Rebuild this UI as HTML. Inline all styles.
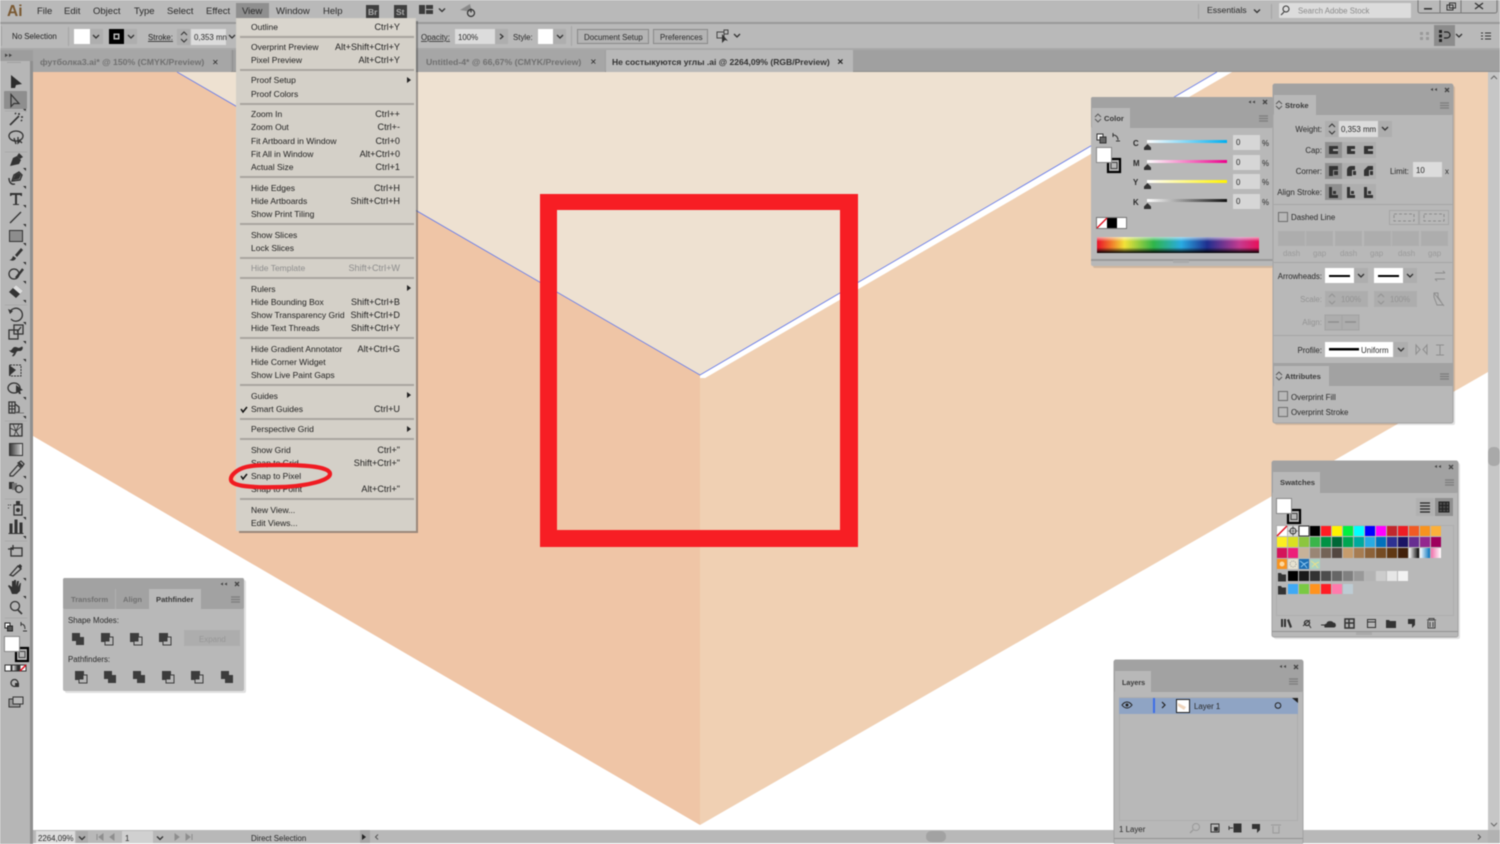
<!DOCTYPE html>
<html><head><meta charset="utf-8"><style>
html,body{margin:0;padding:0;width:1500px;height:844px;overflow:hidden;background:#fff}
svg{display:block;filter:blur(.4px)}
text{font-family:"Liberation Sans",sans-serif;font-size:7.9px;fill:#1f1f1f}
.m text{font-size:8.5px}
.m text.e{font-size:9.1px}
.e{text-anchor:end}
.d{fill:#8d8d8d}
.l{fill:#2a2a2a}
.g{fill:#8a8a8a}
.ic{fill:#333;stroke:none}
.st{fill:none;stroke:#333;stroke-width:1.3}
.pt{font-weight:bold;font-size:7.600px;fill:#3a3a3a}
.ti{font-weight:bold;font-size:8.700px;fill:#707070}
</style></head><body>
<svg width="1500" height="844" viewBox="0 0 1500 844" xmlns="http://www.w3.org/2000/svg">
<defs>
<linearGradient id="spec" x1="0" x2="1"><stop offset="0" stop-color="#e8102a"/><stop offset=".08" stop-color="#f0702a"/><stop offset=".17" stop-color="#f2e238"/><stop offset=".35" stop-color="#2fb54a"/><stop offset=".52" stop-color="#29abe2"/><stop offset=".68" stop-color="#1f2f8f"/><stop offset=".88" stop-color="#c43b8f"/><stop offset="1" stop-color="#e8105a"/></linearGradient>
<linearGradient id="fade" x1="0" x2="0" y1="0" y2="1"><stop offset="0" stop-color="#fff" stop-opacity=".6"/><stop offset=".28" stop-color="#fff" stop-opacity="0"/><stop offset=".66" stop-color="#000" stop-opacity="0"/><stop offset="1" stop-color="#000"/></linearGradient>
<linearGradient id="cG" x1="0" x2="1"><stop offset="0" stop-color="#fff"/><stop offset="1" stop-color="#00aeef"/></linearGradient>
<linearGradient id="mG" x1="0" x2="1"><stop offset="0" stop-color="#fff"/><stop offset="1" stop-color="#ec008c"/></linearGradient>
<linearGradient id="yG" x1="0" x2="1"><stop offset="0" stop-color="#fff"/><stop offset="1" stop-color="#fff200"/></linearGradient>
<linearGradient id="kG" x1="0" x2="1"><stop offset="0" stop-color="#fff"/><stop offset="1" stop-color="#111"/></linearGradient>
<linearGradient id="gr" x1="0" x2="1"><stop offset="0" stop-color="#333"/><stop offset="1" stop-color="#ddd"/></linearGradient>
<linearGradient id="gs" x1="0" x2="1"><stop offset="0" stop-color="#fff"/><stop offset="1" stop-color="#000"/></linearGradient>
<linearGradient id="gb" x1="0" x2="1"><stop offset="0" stop-color="#fff"/><stop offset="1" stop-color="#0071bc"/></linearGradient>
<linearGradient id="gp" x1="0" x2="1"><stop offset="0" stop-color="#f06eaa"/><stop offset="1" stop-color="#fff"/></linearGradient>
<g id="sq2"><rect x="0" y="0" width="8" height="8" fill="#3c3c3c"/><rect x="4" y="4" width="8" height="8" fill="#3c3c3c"/></g>
<g id="sq3"><rect x=".5" y=".5" width="8" height="8" fill="#3c3c3c" stroke="#3c3c3c"/><rect x="4" y="4" width="8" height="8" fill="#b8b8b8" stroke="#3c3c3c"/><rect x="4" y="4" width="4.500" height="4.500" fill="#3c3c3c"/></g>
<g id="fs"><rect x="12" y="12" width="12" height="13" fill="#b8b8b8" stroke="#000" stroke-width="2.2"/><rect x="15" y="15.500" width="6" height="6" fill="none" stroke="#444"/><rect x=".5" y=".5" width="15" height="15" fill="#fff" stroke="#8a8a8a"/></g>
<g id="chev"><path d="M-3-1.500 0 1.500 3-1.500" fill="none" stroke="#333" stroke-width="1.300"/></g>
<g id="mn"><path d="M0 0h9M0 2.500h9M0 5h9" stroke="#7d7d7d" stroke-width="1.200" fill="none"/></g>
<g id="pc"><path d="M0 3 3 0 6 3M0 5 3 8 6 5" stroke="#555" fill="none" stroke-width=".9"/></g>
<path id="tri" d="M0 3V0H-3Z" fill="#333"/>
</defs>

<!-- artwork -->
<rect x="33" y="72" width="1455" height="758" fill="#fff"/>
<polygon points="33,72 177,72 700,375 700,825 33,436" fill="#efc5a6"/>
<polygon points="700,378 705,378 1232,72 1488,72 1488,372 700,825" fill="#f0d0b3"/>
<polygon points="177,72 1217,72 700,375" fill="#eee1d1"/>
<polygon points="1217,72 1232,72 705,378 700,375" fill="#fff"/>
<path d="M177 72 700 375 1217 72" fill="none" stroke="#6a7de8" stroke-width=".9"/>
<path d="M540 194H858V547H540ZM557 210V530H840V210Z" fill="#f71e24" fill-rule="evenodd"/>

<!-- top bars -->
<rect width="1500" height="23" fill="#b9b9b9"/>
<rect y="22" width="1500" height="2" fill="#9a9a9a"/>
<rect y="24" width="1500" height="25" fill="#b9b9b9"/>
<rect y="48" width="1500" height="2" fill="#a8a8a8"/>
<rect y="50" width="1500" height="22" fill="#a0a0a0"/>
<rect y="71" width="1500" height="1" fill="#8f8f8f"/>
<text x="7" y="16" style="font-size:15.500px;font-weight:bold;fill:#7b5a33">Ai</text>
<text x="37" y="14" class="l" style="font-size:9.500px">File</text>
<text x="64" y="14" class="l" style="font-size:9.500px">Edit</text>
<text x="93" y="14" class="l" style="font-size:9.500px">Object</text>
<text x="134" y="14" class="l" style="font-size:9.500px">Type</text>
<text x="167" y="14" class="l" style="font-size:9.500px">Select</text>
<text x="206" y="14" class="l" style="font-size:9.500px">Effect</text>
<rect x="236" y="3" width="33" height="17" fill="#8f8f8f"/>
<text x="242" y="14" class="l" style="font-size:9.500px">View</text>
<text x="276" y="14" class="l" style="font-size:9.500px">Window</text>
<text x="323" y="14" class="l" style="font-size:9.500px">Help</text>
<rect x="366" y="5" width="13" height="13" fill="#3f3f3f"/><text x="368" y="15" style="font-size:8.500px;fill:#aaa;font-weight:bold">Br</text>
<rect x="394" y="5" width="13" height="13" fill="#3f3f3f"/><text x="396" y="15" style="font-size:8.500px;fill:#aaa;font-weight:bold">St</text>
<rect x="419" y="5" width="6" height="9" fill="#3c3c3c"/><rect x="426" y="5" width="7" height="4" fill="#3c3c3c"/><rect x="426" y="10" width="7" height="4" fill="#3c3c3c"/>
<use href="#chev" x="442" y="10"/>
<path d="M460 10 470 4 472 12Z" fill="#8b8b8b"/><circle cx="471" cy="13" r="3.500" fill="none" stroke="#333" stroke-width="1.200"/><path d="M471 8.500v4" stroke="#333"/>

<rect x="1198" y="4" width="1" height="15" fill="#a4a4a4"/><rect x="1271" y="4" width="1" height="15" fill="#a4a4a4"/>
<text x="1207" y="13" class="l" style="font-size:8.700px">Essentials</text>
<use href="#chev" x="1257" y="11"/>
<rect x="1279" y="3" width="132" height="15" rx="1" fill="#dcdcdc"/>
<circle cx="1286" cy="9" r="3" fill="none" stroke="#333"/><path d="M1284 12 1281 15" stroke="#333"/>
<text x="1298" y="13.500" class="g">Search Adobe Stock</text>
<path d="M1418 0v11a2 2 0 0 0 2 2h75a2 2 0 0 0 2-2V0M1440 0v13M1461 0v13" fill="none" stroke="#777"/>
<rect x="1424" y="8" width="8" height="1.600" fill="#333"/>
<rect x="1447" y="5" width="6" height="5" fill="none" stroke="#333"/><rect x="1449.500" y="3" width="6" height="5" fill="none" stroke="#333"/>
<path d="M1475 3 1483 9M1483 3 1475 9" stroke="#333" stroke-width="1.300"/>

<!-- control bar -->
<rect x="1" y="26" width="1" height="20" fill="#a4a4a4"/>
<text x="12" y="39">No Selection</text>
<rect x="68" y="27" width="1" height="19" fill="#a4a4a4"/>
<rect x="74" y="29" width="16" height="15" fill="#fff"/>
<rect x="90" y="29" width="13" height="15" fill="#aeaeae"/><use href="#chev" x="96" y="36.500"/>
<rect x="109" y="29" width="15" height="15" fill="#000"/><rect x="113" y="33" width="7" height="7" fill="#bbb" stroke="#000"/><rect x="115" y="35" width="3" height="3" fill="#000"/>
<rect x="124" y="29" width="13" height="15" fill="#aeaeae"/><use href="#chev" x="131" y="36.500"/>
<text x="148" y="40" style="text-decoration:underline">Stroke:</text>
<rect x="177" y="29" width="13" height="16" fill="#aeaeae"/><path d="M181 35l3-3 3 3M181 39l3 3 3-3" fill="none" stroke="#333"/>
<rect x="191" y="29" width="35" height="16" fill="#dcdcdc"/>
<text x="194" y="40" class="l">0,353 mn</text><use href="#chev" x="232" y="36.500"/>

<text x="421" y="40" class="l" style="text-decoration:underline">Opacity:</text>
<rect x="455" y="29" width="40" height="15" fill="#dcdcdc"/><text x="458" y="40" class="l">100%</text>
<rect x="495" y="29" width="13" height="15" fill="#aeaeae"/><path d="M500 34l3 2.500-3 2.500" fill="none" stroke="#333" stroke-width="1.200"/>
<text x="513" y="40" class="l">Style:</text>
<rect x="538" y="29" width="15" height="15" fill="#fff"/><rect x="553" y="29" width="13" height="15" fill="#aeaeae"/><use href="#chev" x="560" y="36.500"/>
<rect x="571" y="26" width="1" height="20" fill="#a4a4a4"/>
<rect x="577.500" y="29.500" width="71" height="14" fill="#b4b4b4" stroke="#888"/><text x="584" y="40" class="l">Document Setup</text>
<rect x="653.500" y="29.500" width="54" height="14" fill="#b4b4b4" stroke="#888"/><text x="660" y="40" class="l">Preferences</text>
<rect x="717" y="32" width="7" height="6" fill="none" stroke="#444"/><rect x="724" y="30" width="4" height="4" fill="none" stroke="#444"/><path d="M722 34v9l3-3 3 1z" fill="#333"/>
<use href="#chev" x="737" y="35.500"/>
<rect x="1420" y="32" width="3" height="3" fill="#999"/><rect x="1426" y="32" width="3" height="3" fill="#999"/><rect x="1420" y="37" width="3" height="3" fill="#999"/><rect x="1426" y="37" width="3" height="3" fill="#999"/>
<rect x="1434" y="25" width="21" height="21" fill="#8c8c8c"/>
<rect x="1439" y="30" width="3" height="3" fill="#222"/><rect x="1439" y="34.500" width="3" height="3" fill="#222"/><rect x="1439" y="39" width="3" height="3" fill="#222"/><path d="M1444 32h3a2.500 2.500 0 0 1 0 6h-3" fill="none" stroke="#222" stroke-width="1.200"/>
<use href="#chev" x="1459" y="35.500"/>
<path d="M1481 33h2M1481 36h2M1481 39h2M1485 33h6M1485 36h6M1485 39h6" stroke="#333" stroke-width="1.100"/>

<!-- tabs -->
<rect x="33" y="50" width="198" height="22" fill="#a6a6a6"/>
<text x="40" y="65" class="ti">футболка3.ai* @ 150% (CMYK/Preview)</text>
<text x="212" y="65" class="l" style="font-size:8px">✕</text>
<rect x="232" y="50" width="1" height="22" fill="#8f8f8f"/>
<rect x="418" y="50" width="187" height="22" fill="#a6a6a6"/>
<text x="426" y="65" class="ti">Untitled-4* @ 66,67% (CMYK/Preview)</text>
<text x="590" y="64.500" class="l" style="font-size:8px">✕</text>
<rect x="606" y="50" width="247" height="22" fill="#b8b8b8"/>
<text x="612" y="65" style="font-weight:bold;font-size:8.550px;fill:#333">Не состыкуются углы .ai @ 2264,09% (RGB/Preview)</text>
<text x="837" y="64.500" style="font-size:8px;fill:#222;font-weight:bold">✕</text>

<!-- left toolbar -->
<rect y="50" width="30" height="794" fill="#b6b6b6"/>
<rect x="30" y="50" width="3" height="794" fill="#8f8f8f"/>
<rect y="50" width="33" height="11" fill="#9d9d9d"/>
<path d="M6 53.500l3 1.800-3 1.800zM10 53.500l3 1.800-3 1.800z" fill="#444" transform="translate(-1 0)"/>
<rect x="7" y="62" width="14" height="1" fill="#a0a0a0"/>
<rect x="4" y="91" width="23" height="18" rx="1" fill="#8e8e8e"/>
<path d="M11 75 22 84 16 85 15 88 11 88z" fill="#2d2d2d"/>
<path d="M11 94.500v12l3-3 5 0z" fill="none" stroke="#333" stroke-width="1.200"/>
<path d="M10 125 19 116M19 113v2M23 117h-2M15 113l1 1M22 121l-1-1" stroke="#333" stroke-width="1.600" fill="none"/>
<ellipse cx="16" cy="136" rx="7" ry="5" class="st"/><path d="M14 138l2 6M18 137v6l2-2 2 2" class="st"/>
<path d="M10 166l3-8 4-2 4 4-2 4z" class="ic"/><path d="M17 156l2-3 4 4-3 2z" class="ic"/>
<path d="M9 178c0 4 2 7 6 6M12 181l2-6 5-3 3 3-2 5z" fill="none" stroke="#333" stroke-width="1.400"/><path d="M13 180l2-5 4-2 2 2-2 4z" class="ic"/>
<path d="M10 193h12v3h-1l-1-1h-3v9h2v1h-6v-1h2v-9h-3l-1 1h-1z" class="ic"/>
<path d="M10 223 21 212" class="st"/>
<rect x="9.500" y="230.500" width="13" height="11" fill="#8d8d8d" stroke="#333"/>
<path d="M9 260c2 0 3-1 4-4l3 2c-1 3-4 3-7 2zM15 255l6-7 2 2-6 7z" class="ic"/>
<circle cx="14" cy="274" r="5" class="st"/><path d="M16 278 23 269" stroke="#333" stroke-width="2.400"/>
<path d="M9 292l7-7 7 6-7 7z" fill="#333"/><path d="M13 288l3-3 7 6-3 3z" fill="#ddd"/>
<path d="M10 312a6.500 6.500 0 1 1 1 7" class="st"/><path d="M8 309l2 5 3-3z" class="ic"/>
<rect x="9" y="330" width="9" height="9" class="st"/><rect x="14" y="325" width="9" height="9" class="st"/><path d="M17 332 21 327" class="st"/>
<path d="M9 350c3 2 3-3 6-3s3 2 6 0 2 4-1 4-3 0-4 2-2 4-4 3l2-3c-2 0-4-1-5-3z" class="ic"/>
<path d="M10 365h11v11H10z" fill="none" stroke="#333" stroke-dasharray="2 1"/><path d="M9 365l7 5-7 6z" class="ic"/>
<ellipse cx="14" cy="388" rx="6" ry="5" class="st"/><path d="M16 385l7 5-3 1 1 3-2 0-1-3-2 1z" class="ic"/>
<path d="M9 402h6v11H9zM15 404l4 3v5l-4 1z" class="st"/><path d="M9 406h6M9 409h6M12 402v11" stroke="#333"/><path d="M15 413h9" stroke="#777"/>
<rect x="10" y="424" width="12" height="12" class="st"/><path d="M10 428l6 3 6-5M13 424l3 7-2 5M19 424l-3 7 3 5" stroke="#333" fill="none" stroke-width=".8"/>
<rect x="9.500" y="443.500" width="13" height="12" fill="url(#gr)" stroke="#333"/>
<path d="M10 474 18 465l3 3-8 8-3 0zM18 463l3-2 3 3-2 3z" fill="none" stroke="#333" stroke-width="1.200"/><path d="M19 463l3 3" stroke="#333" stroke-width="2"/>
<rect x="9" y="482" width="5" height="7" fill="#333"/><rect x="12" y="483" width="5" height="7" fill="#777"/><circle cx="19" cy="489" r="3.500" class="st"/>
<rect x="14" y="505" width="8" height="10" class="st"/><rect x="16" y="501" width="4" height="4" class="ic"/><circle cx="18" cy="510" r="2" class="ic"/><path d="M8 505h4M8 508h2" stroke="#333" stroke-dasharray="1 1"/>
<path d="M10 533v-9h2v9zM15 533v-13h2v13zM20 533v-10h2v10zM8.500 533.500h15" stroke="#333" fill="#333"/>
<rect x="11" y="548" width="11" height="8" class="st"/><path d="M8 549h5M13 545v5" class="st"/>
<path d="M10 575l8-9 3 3-8 7z" class="st"/><path d="M18 566l2-2 2 2-1 3z" class="ic"/>
<path d="M10 589l-2-3 1-1 3 2v-6l2 0 0 5 0-6h2l0 6 1-5h2l-1 6 2-4h1l-1 8-3 3h-5z" class="ic"/>
<circle cx="15" cy="606" r="4.500" class="st"/><path d="M18 610l4 4" stroke="#333" stroke-width="1.600"/>
<rect x="5" y="623" width="5" height="5" fill="#fff" stroke="#222"/><rect x="7.500" y="626" width="5" height="5" fill="#555" stroke="#222"/>
<path d="M21 624c3 0 4 2 4 5M21 622v4M23 631h4" fill="none" stroke="#333"/>
<use href="#fs" x="4" y="636"/>
<rect x="5" y="665" width="6" height="6" fill="#fff" stroke="#333"/><rect x="12" y="665" width="7" height="6" fill="url(#gs)" stroke="#333"/><rect x="20" y="665" width="6" height="6" fill="#fff" stroke="#333"/><path d="M20 671l6-6" stroke="#e01020" stroke-width="1.500"/>
<circle cx="14.500" cy="683" r="3.500" class="st"/><rect x="15" y="683" width="4" height="4" class="ic"/>
<rect x="9" y="699" width="11" height="8" fill="#999" stroke="#333"/><rect x="13" y="697" width="10" height="7" fill="#bbb" stroke="#333"/>
<use href="#tri" x="26" y="109"/><use href="#tri" x="26" y="168"/><use href="#tri" x="26" y="186"/><use href="#tri" x="26" y="205"/><use href="#tri" x="26" y="224"/><use href="#tri" x="26" y="243"/><use href="#tri" x="26" y="262"/><use href="#tri" x="26" y="281"/><use href="#tri" x="26" y="300"/><use href="#tri" x="26" y="322"/><use href="#tri" x="26" y="341"/><use href="#tri" x="26" y="359"/><use href="#tri" x="26" y="397"/><use href="#tri" x="26" y="416"/><use href="#tri" x="26" y="476"/><use href="#tri" x="26" y="517"/><use href="#tri" x="26" y="536"/><use href="#tri" x="26" y="578"/><use href="#tri" x="26" y="596"/>
<path d="M5 111h22M5 152h22M5 305h22M5 421h22M5 499h22M5 541h22M5 618h22" stroke="#a8a8a8"/>

<!-- status bar -->
<rect x="33" y="830" width="1455" height="13" fill="#b8b8b8"/>
<rect x="33" y="843" width="1467" height="1" fill="#f2f2f2"/>
<rect x="36" y="831" width="39" height="12" fill="#dcdcdc"/><text x="38" y="841" class="l">2264,09%</text>
<rect x="76" y="831" width="12" height="12" fill="#ababab"/><use href="#chev" x="82" y="838"/>
<path d="M97 834v6M103 834l-4 3 4 3zM114 834l-4 3 4 3z" fill="#8e8e8e" stroke="#8e8e8e"/>
<rect x="122" y="831" width="31" height="12" fill="#d0d0d0"/><text x="125" y="841" class="l">1</text>
<use href="#chev" x="160" y="838"/>
<path d="M175 834l4 3-4 3zM186 834l4 3-4 3zM192 834v6" fill="#8e8e8e" stroke="#8e8e8e"/>
<text x="251" y="841" class="l">Direct Selection</text>
<rect x="360" y="830" width="10" height="13" fill="#a5a5a5"/><path d="M362 834l4 3-4 3z" fill="#222"/>
<path d="M378 834.500l-2.500 2.500 2.500 2.500" fill="none" stroke="#555"/>
<rect x="926" y="831" width="20" height="11" rx="5" fill="#a2a2a2"/>
<path d="M1478 834.500l2.500 2.500-2.500 2.500" fill="none" stroke="#555"/>
<rect x="1488" y="72" width="12" height="758" fill="#c6c6c6"/>
<rect x="1488" y="830" width="12" height="13" fill="#b2b2b2"/>
<rect x="1488" y="447" width="12" height="19" rx="5" fill="#a9a9a9"/>
<path d="M1491 79l3-3 3 3M1491 823l3 3 3-3" fill="none" stroke="#666"/>

<!-- View menu -->
<rect x="239" y="21" width="179" height="512" fill="#555" opacity=".55"/>
<rect x="236" y="18" width="180" height="513" fill="#d4d0c8"/>
<rect x="237" y="19" width="178" height="16" fill="#d9d5cd"/>
<g fill="#a9a69f">
<rect x="240" y="36" width="174" height="2"/><rect x="240" y="69" width="174" height="2"/><rect x="240" y="103" width="174" height="2"/><rect x="240" y="176" width="174" height="2"/><rect x="240" y="223" width="174" height="2"/><rect x="240" y="257" width="174" height="2"/><rect x="240" y="277" width="174" height="2"/><rect x="240" y="337" width="174" height="2"/><rect x="240" y="384" width="174" height="2"/><rect x="240" y="418" width="174" height="2"/><rect x="240" y="438" width="174" height="2"/><rect x="240" y="498" width="174" height="2"/>
</g>
<g class="m">
<text x="251" y="30">Outline</text><text x="400" y="30" class="e">Ctrl+Y</text>
<text x="251" y="50">Overprint Preview</text><text x="400" y="50" class="e">Alt+Shift+Ctrl+Y</text>
<text x="251" y="63">Pixel Preview</text><text x="400" y="63" class="e">Alt+Ctrl+Y</text>
<text x="251" y="83">Proof Setup</text>
<text x="251" y="97">Proof Colors</text>
<text x="251" y="117">Zoom In</text><text x="400" y="117" class="e">Ctrl++</text>
<text x="251" y="130">Zoom Out</text><text x="400" y="130" class="e">Ctrl+-</text>
<text x="251" y="144">Fit Artboard in Window</text><text x="400" y="144" class="e">Ctrl+0</text>
<text x="251" y="157">Fit All in Window</text><text x="400" y="157" class="e">Alt+Ctrl+0</text>
<text x="251" y="170">Actual Size</text><text x="400" y="170" class="e">Ctrl+1</text>
<text x="251" y="191">Hide Edges</text><text x="400" y="191" class="e">Ctrl+H</text>
<text x="251" y="204">Hide Artboards</text><text x="400" y="204" class="e">Shift+Ctrl+H</text>
<text x="251" y="217">Show Print Tiling</text>
<text x="251" y="238">Show Slices</text>
<text x="251" y="251">Lock Slices</text>
<text x="251" y="271" class="d">Hide Template</text><text x="400" y="271" class="e d">Shift+Ctrl+W</text>
<text x="251" y="292">Rulers</text>
<text x="251" y="305">Hide Bounding Box</text><text x="400" y="305" class="e">Shift+Ctrl+B</text>
<text x="251" y="318">Show Transparency Grid</text><text x="400" y="318" class="e">Shift+Ctrl+D</text>
<text x="251" y="331">Hide Text Threads</text><text x="400" y="331" class="e">Shift+Ctrl+Y</text>
<text x="251" y="352">Hide Gradient Annotator</text><text x="400" y="352" class="e">Alt+Ctrl+G</text>
<text x="251" y="365">Hide Corner Widget</text>
<text x="251" y="378">Show Live Paint Gaps</text>
<text x="251" y="399">Guides</text>
<text x="251" y="412">Smart Guides</text><text x="400" y="412" class="e">Ctrl+U</text>
<text x="251" y="432">Perspective Grid</text>
<text x="251" y="453">Show Grid</text><text x="400" y="453" class="e">Ctrl+"</text>
<text x="251" y="466">Snap to Grid</text><text x="400" y="466" class="e">Shift+Ctrl+"</text>
<text x="251" y="479">Snap to Pixel</text>
<text x="251" y="492">Snap to Point</text><text x="400" y="492" class="e">Alt+Ctrl+"</text>
<text x="251" y="513">New View...</text>
<text x="251" y="526">Edit Views...</text>
</g>
<path d="M407 77l4 3-4 3zM407 285l4 3-4 3zM407 392l4 3-4 3zM407 426l4 3-4 3z" fill="#222"/>
<path d="M241 409l2 3 4-5M241 476l2 3 4-5" fill="none" stroke="#111" stroke-width="1.500"/>
<path d="M246 467c-8 2-16 8-15 13 1 6 20 8 50 7 28-1 49-7 49-13 0-7-22-9-50-9-14 0-26 0-34 2z" fill="none" stroke="#f01b22" stroke-width="4.200"/>

<!-- Pathfinder -->
<rect x="65" y="580" width="181" height="113" rx="2" fill="#000" opacity=".12"/>
<rect x="63" y="578" width="181" height="113" rx="2" fill="#b8b8b8"/>
<rect x="63" y="578" width="181" height="31" rx="2" fill="#a2a2a2"/>
<rect x="149" y="589" width="52" height="20" fill="#b8b8b8"/>
<rect x="115" y="589" width="1" height="20" fill="#b0b0b0"/>
<text x="71" y="602" class="pt" style="fill:#707070">Transform</text>
<text x="123" y="602" class="pt" style="fill:#707070">Align</text>
<text x="156" y="602" class="pt">Pathfinder</text>
<use href="#mn" x="231" y="597"/>
<path d="M223 582.500l-2.500 1.500 2.500 1.500zM227 582.500l-2.500 1.500 2.500 1.500z" fill="#444"/>
<path d="M235 582l4 4M239 582l-4 4" stroke="#444" stroke-width="1.300"/>
<text x="68" y="623" class="l">Shape Modes:</text>
<use href="#sq2" x="72" y="633"/>
<use href="#sq3" x="101" y="633"/><use href="#sq3" x="130" y="633"/><use href="#sq3" x="159" y="633"/>
<rect x="184" y="630" width="56" height="16" fill="#adadad"/><text x="199" y="642" style="fill:#979797">Expand</text>
<text x="68" y="662" class="l">Pathfinders:</text>
<use href="#sq3" x="75" y="671"/><use href="#sq2" x="104" y="671"/><use href="#sq2" x="133" y="671"/><use href="#sq3" x="162" y="671"/><use href="#sq3" x="191" y="671"/><use href="#sq2" x="221" y="671"/>

<!-- Color -->
<rect x="1093" y="99" width="180" height="169" rx="2" fill="#000" opacity=".12"/>
<rect x="1091" y="97" width="182" height="169" rx="2" fill="#b8b8b8"/>
<rect x="1091" y="97" width="182" height="31" rx="2" fill="#a2a2a2"/>
<rect x="1092" y="108" width="38" height="20" fill="#b8b8b8"/>
<use href="#pc" x="1095" y="114"/>
<text x="1104" y="121" class="pt">Color</text>
<use href="#mn" x="1259" y="116"/>
<path d="M1251 100.500l-2.500 1.500 2.500 1.500zM1255 100.500l-2.500 1.500 2.500 1.500z" fill="#444"/>
<path d="M1263 100l4 4M1267 100l-4 4" stroke="#444" stroke-width="1.300"/>
<rect x="1097" y="134" width="6" height="6" fill="#fff" stroke="#333"/><rect x="1100" y="137" width="6" height="6" fill="#666" stroke="#333"/>
<path d="M1113 135c3 0 5 2 5 5M1113 133v4M1116 141h4" fill="none" stroke="#333"/>
<use href="#fs" x="1096" y="147"/>
<rect x="1147" y="140" width="80" height="3" fill="url(#cG)"/><rect x="1147" y="160" width="80" height="3" fill="url(#mG)"/><rect x="1147" y="180" width="80" height="3" fill="url(#yG)"/><rect x="1147" y="199" width="80" height="3" fill="url(#kG)"/>
<path d="M1144 150v-2.500l3.500-3.500 3.500 3.500v2.500zM1144 170v-2.500l3.500-3.500 3.500 3.500v2.500zM1144 189v-2.500l3.500-3.500 3.500 3.500v2.500zM1144 209v-2.500l3.500-3.500 3.500 3.500v2.500z" fill="#333"/>
<text x="1133" y="146" class="l" style="font-weight:bold">C</text><text x="1133" y="166" class="l" style="font-weight:bold">M</text><text x="1133" y="185" class="l" style="font-weight:bold">Y</text><text x="1133" y="205" class="l" style="font-weight:bold">K</text>
<rect x="1233" y="135" width="27" height="15" fill="#d6d6d6"/><rect x="1233" y="155" width="27" height="15" fill="#d6d6d6"/><rect x="1233" y="174" width="27" height="15" fill="#d6d6d6"/><rect x="1233" y="194" width="27" height="15" fill="#d6d6d6"/>
<text x="1236" y="145" class="l">0</text><text x="1236" y="165" class="l">0</text><text x="1236" y="185" class="l">0</text><text x="1236" y="204" class="l">0</text>
<text x="1262" y="146" class="l">%</text><text x="1262" y="166" class="l">%</text><text x="1262" y="185" class="l">%</text><text x="1262" y="205" class="l">%</text>
<rect x="1096.500" y="217.500" width="30" height="11" fill="#fff" stroke="#777"/><rect x="1107" y="218" width="10" height="10" fill="#000"/><path d="M1097 228l10-10" stroke="#e01020" stroke-width="1.300"/>
<rect x="1097" y="237" width="162" height="16" fill="url(#spec)"/><rect x="1097" y="237" width="162" height="16" fill="url(#fade)"/>
<rect x="1091" y="259" width="182" height="2" fill="#999"/>
<rect x="1173" y="260" width="16" height="3" fill="#aaa"/>

<!-- Stroke -->
<rect x="1275" y="86" width="180" height="339" rx="2" fill="#000" opacity=".12"/>
<rect x="1273" y="84" width="180" height="339" rx="2" fill="#b8b8b8" stroke="#a4a4a4"/>
<rect x="1273" y="84" width="180" height="31" rx="2" fill="#a2a2a2"/>
<rect x="1274" y="95" width="42" height="20" fill="#b8b8b8"/>
<use href="#pc" x="1276" y="101"/>
<text x="1285" y="108" class="pt">Stroke</text>
<use href="#mn" x="1440" y="103"/>
<path d="M1433 88l-2.500 1.500 2.500 1.500zM1437 88l-2.500 1.500 2.500 1.500z" fill="#444"/>
<path d="M1445 88l4 4M1449 88l-4 4" stroke="#444" stroke-width="1.300"/>
<text x="1322" y="132" class="e l">Weight:</text><text x="1322" y="153" class="e l">Cap:</text><text x="1322" y="174" class="e l">Corner:</text><text x="1322" y="195" class="e l">Align Stroke:</text>
<rect x="1325" y="121" width="13" height="16" fill="#aeaeae"/><path d="M1329 127l3-3 3 3M1329 131l3 3 3-3" fill="none" stroke="#333"/>
<rect x="1339" y="121" width="39" height="16" fill="#dcdcdc"/><text x="1341" y="132" class="l">0,353 mm</text>
<rect x="1378" y="121" width="14" height="16" fill="#aeaeae"/><use href="#chev" x="1385" y="128.500"/>
<rect x="1325" y="142" width="51" height="16" fill="#aeaeae"/><rect x="1325" y="142" width="17" height="16" fill="#8f8f8f"/>
<rect x="1325" y="163" width="51" height="16" fill="#aeaeae"/><rect x="1325" y="163" width="17" height="16" fill="#8f8f8f"/>
<rect x="1325" y="184" width="51" height="16" fill="#aeaeae"/><rect x="1325" y="184" width="17" height="16" fill="#8f8f8f"/>
<path d="M1329 146h9v8h-9zM1347 146h8v3h-4v2h4v3h-8zM1364 146h9v8h-9z" fill="#333"/><path d="M1333 149h5v2h-5zM1368 149h5v2h-5z" fill="#aeaeae"/>
<path d="M1329 166h9v4h-5v6h-4zM1347 176v-6a4 4 0 0 1 4-4h4v4h-3v6zM1364 176v-6l4-4h5v4h-4v6z" fill="#333"/><rect x="1334" y="171" width="4" height="4" fill="#333"/><rect x="1353" y="171" width="3" height="4" fill="#333"/><rect x="1370" y="171" width="3" height="4" fill="#333"/>
<path d="M1329 187h3v8h6v3h-9zM1347 187h3v8h5v3h-8zM1364 187h3v8h6v3h-9z" fill="#333"/><path d="M1333 191h3v3h-3zM1351 191h3v3h-3zM1368 191h3v3h-3z" fill="#333"/>
<text x="1390" y="174" class="l">Limit:</text>
<rect x="1413" y="162" width="29" height="15" fill="#dcdcdc"/><text x="1416" y="173" class="l">10</text>
<text x="1445" y="174" class="l">x</text>
<rect x="1273" y="204" width="180" height="1" fill="#a6a6a6"/>
<rect x="1278.500" y="212.500" width="9" height="9" fill="none" stroke="#6e6e6e"/>
<text x="1291" y="220" class="l">Dashed Line</text>
<rect x="1389.500" y="210.500" width="29" height="14" fill="none" stroke="#a6a6a6"/><rect x="1419.500" y="210.500" width="29" height="14" fill="none" stroke="#a6a6a6"/>
<path d="M1394 214h20v7h-20zM1424 214h20v7h-20z" fill="none" stroke="#8e8e8e" stroke-dasharray="3 2"/>
<g fill="#adadad"><rect x="1278" y="231" width="27" height="15"/><rect x="1306" y="231" width="27" height="15"/><rect x="1335" y="231" width="27" height="15"/><rect x="1364" y="231" width="27" height="15"/><rect x="1392" y="231" width="27" height="15"/><rect x="1421" y="231" width="27" height="15"/></g>
<text x="1283" y="256" style="fill:#9a9a9a">dash</text><text x="1313" y="256" style="fill:#9a9a9a">gap</text><text x="1340" y="256" style="fill:#9a9a9a">dash</text><text x="1370" y="256" style="fill:#9a9a9a">gap</text><text x="1398" y="256" style="fill:#9a9a9a">dash</text><text x="1428" y="256" style="fill:#9a9a9a">gap</text>
<rect x="1273" y="262" width="180" height="1" fill="#a6a6a6"/>
<text x="1322" y="279" class="e l">Arrowheads:</text>
<rect x="1325" y="268" width="29" height="15" fill="#fff"/><rect x="1329" y="275" width="21" height="2" fill="#000"/><rect x="1354" y="268" width="14" height="15" fill="#aeaeae"/><use href="#chev" x="1361" y="275.500"/>
<rect x="1374" y="268" width="29" height="15" fill="#fff"/><rect x="1378" y="275" width="21" height="2" fill="#000"/><rect x="1403" y="268" width="14" height="15" fill="#aeaeae"/><use href="#chev" x="1410" y="275.500"/>
<path d="M1435 273h10M1445 273l-2-2M1445 279h-10M1435 279l2 2" stroke="#8e8e8e" fill="none"/>
<text x="1322" y="302" class="e" style="fill:#939393">Scale:</text>
<rect x="1325" y="291" width="43" height="16" fill="#adadad"/><rect x="1374" y="291" width="43" height="16" fill="#adadad"/>
<path d="M1329 297l3-3 3 3M1329 301l3 3 3-3M1378 297l3-3 3 3M1378 301l3 3 3-3" fill="none" stroke="#939393"/>
<text x="1341" y="302" style="fill:#939393">100%</text><text x="1390" y="302" style="fill:#939393">100%</text>
<path d="M1434 293h4v4l5 8h-6l-3-8zM1434 293l10 13" fill="none" stroke="#8e8e8e"/>
<text x="1322" y="325" class="e" style="fill:#939393">Align:</text>
<rect x="1325" y="315" width="34" height="15" fill="#adadad" stroke="#a2a2a2"/><path d="M1342 315v15" stroke="#a2a2a2"/>
<path d="M1328 322h11M1345 322h11" stroke="#8e8e8e" stroke-width="1.500"/>
<rect x="1273" y="335" width="180" height="1" fill="#a6a6a6"/>
<text x="1322" y="353" class="e l">Profile:</text>
<rect x="1325" y="342" width="68" height="15" fill="#fff"/><rect x="1329" y="348" width="30" height="2.500" fill="#000"/><text x="1361" y="353" class="l">Uniform</text>
<rect x="1394" y="342" width="14" height="15" fill="#aeaeae"/><use href="#chev" x="1401" y="349.500"/>
<path d="M1416 345v9l4-4.500zM1427 345v9l-4-4.500zM1436 345h8M1436 355h8M1440 345v10" fill="none" stroke="#8e8e8e"/>
<rect x="1273" y="363" width="180" height="23" fill="#a2a2a2"/>
<rect x="1274" y="366" width="55" height="20" fill="#b8b8b8"/>
<use href="#pc" x="1276" y="372"/>
<text x="1285" y="379" class="pt">Attributes</text>
<use href="#mn" x="1440" y="374"/>
<rect x="1278.500" y="391.500" width="9" height="9" fill="none" stroke="#6e6e6e"/>
<text x="1291" y="400" class="l">Overprint Fill</text>
<rect x="1278.500" y="407.500" width="9" height="9" fill="none" stroke="#6e6e6e"/>
<text x="1291" y="415" class="l">Overprint Stroke</text>

<!-- Swatches -->
<rect x="1274" y="463" width="186" height="176" rx="2" fill="#000" opacity=".12"/>
<rect x="1272" y="461" width="186" height="176" rx="2" fill="#b8b8b8" stroke="#a4a4a4"/>
<rect x="1272" y="461" width="186" height="32" rx="2" fill="#a2a2a2"/>
<rect x="1273" y="472" width="47" height="21" fill="#b8b8b8"/>
<text x="1280" y="485" class="pt">Swatches</text>
<use href="#mn" x="1445" y="480"/>
<path d="M1437 465l-2.500 1.500 2.500 1.500zM1441 465l-2.500 1.500 2.500 1.500z" fill="#444"/>
<path d="M1449 465l4 4M1453 465l-4 4" stroke="#444" stroke-width="1.300"/>
<use href="#fs" x="1276" y="498"/>
<rect x="1416" y="498" width="18" height="18" fill="#b0b0b0"/>
<rect x="1435" y="498" width="18" height="18" fill="#909090"/>
<path d="M1420 503h10M1420 506h10M1420 509h10M1420 512h10" stroke="#222" stroke-width="1.200"/>
<path d="M1439 502h10v10h-10zM1442.500 502v10M1446 502v10M1439 505.500h10M1439 509h10" fill="none" stroke="#222" stroke-width="1"/>
<rect x="1439" y="502" width="10" height="10" fill="#222" opacity=".65"/>
<rect x="1276.500" y="525.500" width="177" height="90" fill="none" stroke="#aeaeae"/>
<rect x="1277" y="526" width="10" height="10" fill="#fff"/><path d="M1277 536l10-10" stroke="#e01020" stroke-width="1.400"/>
<rect x="1288" y="526" width="10" height="10" fill="#ddd"/><circle cx="1293" cy="531" r="3" fill="none" stroke="#333"/><path d="M1288 531h10M1293 526v10" stroke="#333" stroke-width=".6"/>
<rect x="1299" y="526" width="10" height="10" fill="#fff" stroke="#333"/>
<rect x="1310" y="526" width="10" height="10" fill="#000"/><rect x="1321" y="526" width="10" height="10" fill="#ff1c24"/><rect x="1332" y="526" width="10" height="10" fill="#fff200"/><rect x="1343" y="526" width="10" height="10" fill="#00f040"/><rect x="1354" y="526" width="10" height="10" fill="#00ffff"/><rect x="1365" y="526" width="10" height="10" fill="#0000ff"/><rect x="1376" y="526" width="10" height="10" fill="#ff00ff"/><rect x="1387" y="526" width="10" height="10" fill="#c1272d"/><rect x="1398" y="526" width="10" height="10" fill="#ed1c24"/><rect x="1409" y="526" width="10" height="10" fill="#f15a24"/><rect x="1420" y="526" width="10" height="10" fill="#f7931e"/><rect x="1431" y="526" width="10" height="10" fill="#fbb03b"/>
<rect x="1277" y="537" width="10" height="10" fill="#fcee21"/><rect x="1288" y="537" width="10" height="10" fill="#d9e021"/><rect x="1299" y="537" width="10" height="10" fill="#8cc63f"/><rect x="1310" y="537" width="10" height="10" fill="#39b54a"/><rect x="1321" y="537" width="10" height="10" fill="#009245"/><rect x="1332" y="537" width="10" height="10" fill="#006837"/><rect x="1343" y="537" width="10" height="10" fill="#00a651"/><rect x="1354" y="537" width="10" height="10" fill="#00a99d"/><rect x="1365" y="537" width="10" height="10" fill="#29abe2"/><rect x="1376" y="537" width="10" height="10" fill="#0071bc"/><rect x="1387" y="537" width="10" height="10" fill="#2e3192"/><rect x="1398" y="537" width="10" height="10" fill="#1b1464"/><rect x="1409" y="537" width="10" height="10" fill="#662d91"/><rect x="1420" y="537" width="10" height="10" fill="#93278f"/><rect x="1431" y="537" width="10" height="10" fill="#9e005d"/>
<rect x="1277" y="548" width="10" height="10" fill="#d4145a"/><rect x="1288" y="548" width="10" height="10" fill="#ed1e79"/><rect x="1299" y="548" width="10" height="10" fill="#c7b299"/><rect x="1310" y="548" width="10" height="10" fill="#998675"/><rect x="1321" y="548" width="10" height="10" fill="#736357"/><rect x="1332" y="548" width="10" height="10" fill="#534741"/><rect x="1343" y="548" width="10" height="10" fill="#c69c6d"/><rect x="1354" y="548" width="10" height="10" fill="#a67c52"/><rect x="1365" y="548" width="10" height="10" fill="#8c6239"/><rect x="1376" y="548" width="10" height="10" fill="#754c24"/><rect x="1387" y="548" width="10" height="10" fill="#603813"/><rect x="1398" y="548" width="10" height="10" fill="#42210b"/><rect x="1409" y="548" width="10" height="10" fill="url(#gs)"/><rect x="1420" y="548" width="10" height="10" fill="url(#gb)"/><rect x="1431" y="548" width="10" height="10" fill="url(#gp)"/>
<rect x="1277" y="559" width="10" height="10" fill="#f7931e"/><circle cx="1282" cy="564" r="2.500" fill="#fcd9a0"/>
<rect x="1288" y="559" width="10" height="10" fill="#e6e2d0"/><circle cx="1293" cy="564" r="3" fill="none" stroke="#999" stroke-dasharray="1 1"/>
<rect x="1299" y="559" width="10" height="10" fill="#1c6fb5"/><path d="M1300 561l4 3 4-2M1301 567l3-3 3 4" stroke="#8cc6ee" fill="none"/>
<rect x="1310" y="559" width="10" height="10" fill="#a9d3c2"/><path d="M1311 561l4 3 4-2M1312 567l3-3 3 4" stroke="#e8e08c" fill="none"/>
<path d="M1278 573h3l1 1.500h4v7h-8z" fill="#333"/>
<rect x="1288" y="571" width="10" height="10" fill="#000"/><rect x="1299" y="571" width="10" height="10" fill="#1a1a1a"/><rect x="1310" y="571" width="10" height="10" fill="#333"/><rect x="1321" y="571" width="10" height="10" fill="#4d4d4d"/><rect x="1332" y="571" width="10" height="10" fill="#666"/><rect x="1343" y="571" width="10" height="10" fill="#808080"/><rect x="1354" y="571" width="10" height="10" fill="#999"/><rect x="1365" y="571" width="10" height="10" fill="#b3b3b3"/><rect x="1376" y="571" width="10" height="10" fill="#ccc"/><rect x="1387" y="571" width="10" height="10" fill="#e6e6e6"/><rect x="1398" y="571" width="10" height="10" fill="#f2f2f2"/>
<path d="M1278 586h3l1 1.500h4v7h-8z" fill="#333"/>
<rect x="1288" y="584" width="10" height="10" fill="#3fa9f5"/><rect x="1299" y="584" width="10" height="10" fill="#7ac943"/><rect x="1310" y="584" width="10" height="10" fill="#ff931e"/><rect x="1321" y="584" width="10" height="10" fill="#ff1d25"/><rect x="1332" y="584" width="10" height="10" fill="#ff7bac"/><rect x="1343" y="584" width="10" height="10" fill="#bdccd4"/>
<path d="M1281 619h2v8h-2zM1284 619h2v8h-2zM1287 620l2-1 3 8-2 1z" fill="#333"/>
<circle cx="1307" cy="623" r="2.500" class="st"/><path d="M1303 626l7-6M1309 625l2 3" stroke="#333"/>
<path d="M1321 625h4M1325 627c-1-3 2-3 2-3 0-3 5-3 6-1 3 0 3 4 1 4z" fill="#333" stroke="#333"/>
<path d="M1345 619h9v9h-9zM1349 619v9M1345 623h9" fill="none" stroke="#333" stroke-width="1.500"/>
<rect x="1367.500" y="619.500" width="8" height="8" fill="none" stroke="#333"/><path d="M1367 622h8" stroke="#333"/>
<path d="M1386 620h3l1 1h6v7h-10z" fill="#333"/>
<path d="M1408 619h7v6l-3 3v-4h-4z" fill="#333"/>
<path d="M1427 620h9M1429 620v-1.500h5v1.500M1428 621v7h7v-7M1430 622v5M1433 622v5" fill="none" stroke="#444"/>
<rect x="1272" y="631" width="186" height="1" fill="#929292"/>
<rect x="1356" y="632" width="16" height="3" fill="#aaa"/>

<!-- Layers -->
<rect x="1114" y="660" width="189" height="184" rx="2" fill="#b8b8b8" stroke="#a4a4a4"/>
<rect x="1114" y="660" width="189" height="32" rx="2" fill="#a2a2a2"/>
<rect x="1115" y="671" width="36" height="21" fill="#b8b8b8"/>
<text x="1122" y="685" class="pt" style="font-size:7.200px">Layers</text>
<use href="#mn" x="1289" y="679"/>
<path d="M1282 665l-2.500 1.500 2.500 1.500zM1286 665l-2.500 1.500 2.500 1.500z" fill="#444"/>
<path d="M1294 665l4 4M1298 665l-4 4" stroke="#444" stroke-width="1.300"/>
<rect x="1119.500" y="697.500" width="178" height="123" fill="none" stroke="#aeaeae"/>
<rect x="1119" y="698" width="179" height="16" fill="#8fa4c4"/>
<path d="M1122 705c3-4 7-4 10 0-3 4-7 4-10 0z" fill="none" stroke="#222"/><circle cx="1127" cy="705" r="1.500" fill="#222"/>
<rect x="1153" y="698" width="2" height="15" fill="#3d6ee8"/>
<path d="M1162 702l3 3-3 3" fill="none" stroke="#222" stroke-width="1.200"/>
<rect x="1176.500" y="699.500" width="13" height="13" fill="#fff" stroke="#222"/><path d="M1178 703l8 4-2 3-6-4z" fill="#efd5bd"/>
<text x="1194" y="709" class="l">Layer 1</text>
<circle cx="1278" cy="705.500" r="2.800" fill="none" stroke="#222"/>
<path d="M1292 698h6v5z" fill="#222"/>
<text x="1119" y="832" class="l">1 Layer</text>
<circle cx="1196" cy="827" r="3.500" fill="none" stroke="#9a9a9a"/><path d="M1193 830l-3 3" stroke="#9a9a9a" stroke-width="1.300"/>
<rect x="1211" y="824" width="8" height="8" fill="none" stroke="#333"/><rect x="1214" y="827" width="4" height="4" fill="#333"/>
<path d="M1229 828h4M1229 826v4M1234 824h7v8h-7z" fill="#333" stroke="#333"/>
<path d="M1252 824h8v6l-3 3v-4h-5z" fill="#333"/>
<path d="M1271 825h10M1273 826v7h6v-7" fill="none" stroke="#9a9a9a"/>
<rect x="1114" y="838" width="189" height="1" fill="#929292"/>
</svg>
</body></html>
